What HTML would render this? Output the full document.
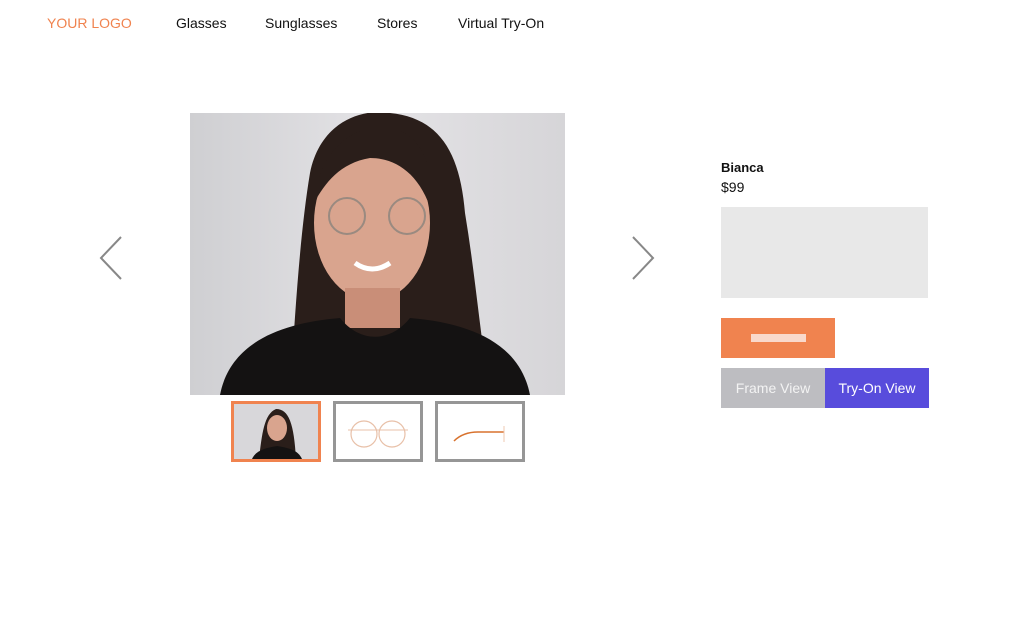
<!DOCTYPE html>
<html><head><style>
body{margin:0;width:1024px;height:639px;background:#fff;font-family:"Liberation Sans",sans-serif;position:relative;overflow:hidden}
.a{position:absolute}
nav span{position:absolute;top:15px;font-size:14px;color:#111}
</style></head><body>
<nav>
<span style="left:47px;color:#f0834f">YOUR LOGO</span>
<span style="left:176px">Glasses</span>
<span style="left:265px">Sunglasses</span>
<span style="left:377px">Stores</span>
<span style="left:458px">Virtual Try-On</span>
</nav>
<svg class="a" style="left:98px;top:235px" width="28" height="46"><path d="M23 2 L3 23 L23 44" stroke="#888" stroke-width="2" fill="none"/></svg>
<svg class="a" style="left:630px;top:235px" width="28" height="46"><path d="M3 2 L23 23 L3 44" stroke="#888" stroke-width="2" fill="none"/></svg>
<svg class="a" style="left:190px;top:113px" width="375" height="282" viewBox="0 0 375 282">
<defs><linearGradient id="w" x1="0" x2="1"><stop offset="0" stop-color="#cfcfd2"/><stop offset=".5" stop-color="#e4e3e6"/><stop offset="1" stop-color="#d6d5d8"/></linearGradient></defs>
<rect width="375" height="282" fill="url(#w)"/>
<path d="M100 282 C105 200 110 120 120 60 C130 10 170 -5 200 0 C250 5 270 40 275 100 C285 160 290 220 300 282 Z" fill="#2a1e1a"/>
<ellipse cx="182" cy="110" rx="58" ry="78" fill="#d9a48e"/>
<path d="M124 90 C130 30 170 10 200 15 C230 20 245 50 242 100 C230 60 205 45 180 45 C150 50 135 70 124 90Z" fill="#2a1e1a"/>
<rect x="155" y="175" width="55" height="40" fill="#c98e78"/>
<path d="M30 282 C40 230 90 210 150 205 C170 230 200 230 220 205 C280 210 330 230 340 282 Z" fill="#141212"/>
<circle cx="157" cy="103" r="18" fill="none" stroke="#9a8a80" stroke-width="2"/>
<circle cx="217" cy="103" r="18" fill="none" stroke="#9a8a80" stroke-width="2"/>
<path d="M165 150 Q182 162 200 150" stroke="#fff" stroke-width="5" fill="none"/>
</svg>
<div class="a" style="left:231px;top:401px;width:84px;height:55px;border:3px solid #f0834f;background:#d8d7da;overflow:hidden">
<svg width="84" height="55"><path d="M25 55 C28 30 30 10 42 5 C55 5 60 20 62 55Z" fill="#2a1e1a"/><ellipse cx="43" cy="24" rx="10" ry="13" fill="#d9a48e"/><path d="M18 55 C22 46 32 44 43 42 C55 44 64 46 68 55Z" fill="#141212"/></svg></div>
<div class="a" style="left:333px;top:401px;width:84px;height:55px;border:3px solid #969696;background:#fff">
<svg width="84" height="55"><circle cx="28" cy="30" r="13" fill="none" stroke="#e8c0a8" stroke-width="1.2"/><circle cx="56" cy="30" r="13" fill="none" stroke="#e8c0a8" stroke-width="1.2"/><path d="M12 26 H72" stroke="#e8c0a8"/></svg></div>
<div class="a" style="left:435px;top:401px;width:84px;height:55px;border:3px solid #969696;background:#fff">
<svg width="84" height="55"><path d="M16 37 Q25 28 40 28 H66" stroke="#d8722e" stroke-width="1.5" fill="none"/><path d="M66 22 V38" stroke="#efc8b0"/></svg></div>
<div class="a" style="left:721px;top:160px;font-size:13px;font-weight:bold;color:#111">Bianca</div>
<div class="a" style="left:721px;top:179px;font-size:14px;color:#111">$99</div>
<div class="a" style="left:721px;top:207px;width:207px;height:91px;background:#e8e8e8"></div>
<div class="a" style="left:721px;top:318px;width:114px;height:40px;background:#f0834f"><div class="a" style="left:30px;top:16px;width:55px;height:8px;background:#f9d9cc"></div></div>
<div class="a" style="left:721px;top:368px;width:104px;height:40px;background:#bdbdc1;color:#f3f3f3;font-size:14px;line-height:40px;text-align:center">Frame View</div>
<div class="a" style="left:825px;top:368px;width:104px;height:40px;background:#584cdc;color:#fff;font-size:14px;line-height:40px;text-align:center">Try-On View</div>
</body></html>
